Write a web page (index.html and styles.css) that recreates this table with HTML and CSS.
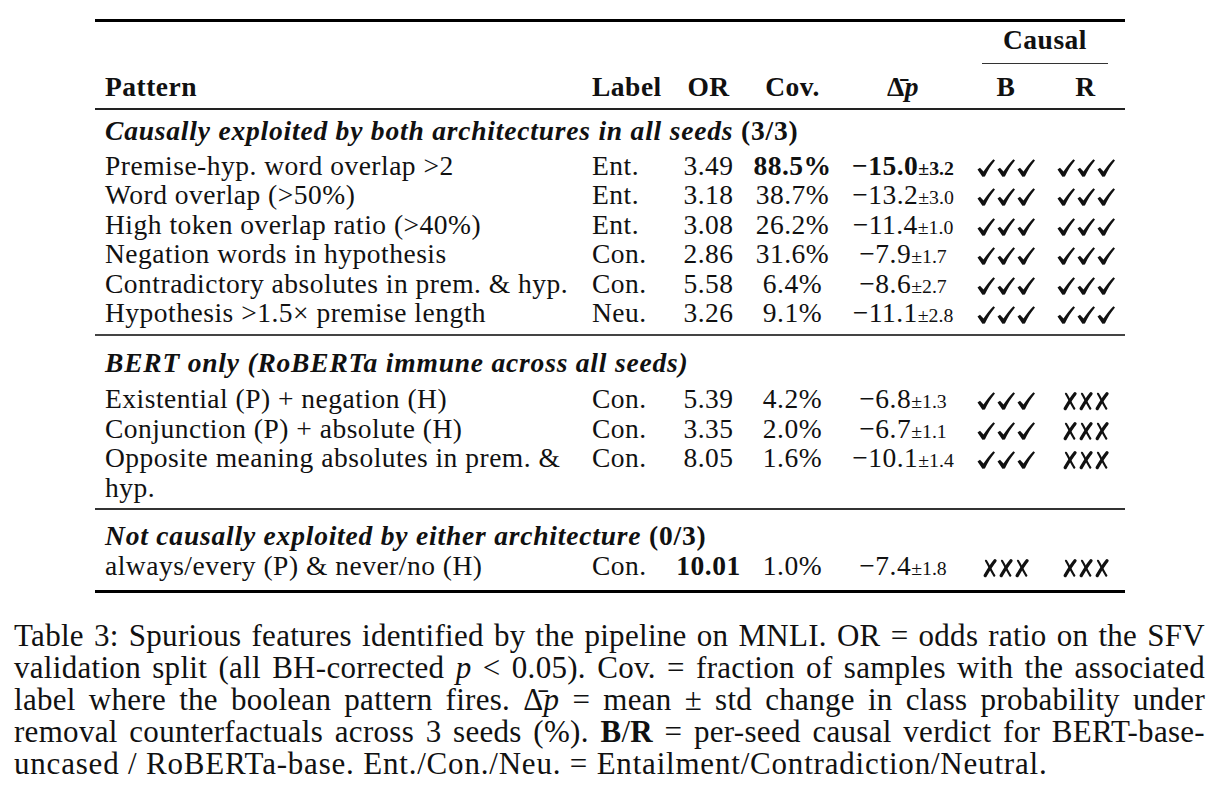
FILE: index.html
```
<!DOCTYPE html>
<html>
<head>
	<meta charset="utf-8">
	<title>Table 3</title>
	<link rel="stylesheet" href="styles.css">
</head>
<body>
	<svg class="defs" width="0" height="0">
		<defs>
			<symbol id="ck" viewBox="0 0 20 20">
				<path d="M1.5 11.6 L4 9.8 L7.5 13.6 C10.5 9 14 4.8 17.4 1.2 L19 2.4 C15 7 11.6 12.6 8.9 18.5 L6.4 18.7 Z"/>
			</symbol>
			<symbol id="xx" viewBox="0 0 16 20">
				<path d="M4 2.8 C6.5 7 9.5 13 12.3 17.6" fill="none" stroke="#111" stroke-width="2.2" stroke-linecap="round"/>
				<path d="M13 2.8 C10 6.5 6.5 12 3.2 17.6" fill="none" stroke="#111" stroke-width="3.3" stroke-linecap="round"/>
			</symbol>
			<symbol id="ck3" viewBox="0 0 60 20">
				<use href="#ck" width="20" height="20"/>
				<use href="#ck" x="20" width="20" height="20"/>
				<use href="#ck" x="40" width="20" height="20"/>
			</symbol>
			<symbol id="xx3" viewBox="0 0 48 20">
				<use href="#xx" width="16" height="20"/>
				<use href="#xx" x="16" width="16" height="20"/>
				<use href="#xx" x="32" width="16" height="20"/>
			</symbol>
		</defs>
	</svg>
	<div class="page">
		<table class="results">
			<colgroup>
				<col class="c-pattern">
				<col class="c-label">
				<col class="c-or">
				<col class="c-cov">
				<col class="c-delta">
				<col class="c-b">
				<col class="c-r">
			</colgroup>
			<thead>
				<tr class="super">
					<th colspan="5"></th>
					<th colspan="2" class="causal"><div class="cmid">Causal</div></th>
				</tr>
				<tr class="head">
					<th class="left">Pattern</th>
					<th class="left">Label</th>
					<th>OR</th>
					<th>Cov.</th>
					<th><span class="dbar">Δ̄</span><i>p</i></th>
					<th>B</th>
					<th>R</th>
				</tr>
			</thead>
			<tbody class="g1">
				<tr class="group-title"><td colspan="7"><b><i>Causally exploited by both architectures in all seeds</i> (3/3)</b></td></tr>
				<tr>
					<td class="left">Premise-hyp. word overlap &gt;2</td>
					<td class="left">Ent.</td>
					<td>3.49</td>
					<td><b>88.5%</b></td>
					<td><b>−15.0<small>±3.2</small></b></td>
					<td><svg class="ticks"><use href="#ck3"/></svg></td>
					<td><svg class="ticks"><use href="#ck3"/></svg></td>
				</tr>
				<tr>
					<td class="left">Word overlap (&gt;50%)</td>
					<td class="left">Ent.</td>
					<td>3.18</td>
					<td>38.7%</td>
					<td>−13.2<small>±3.0</small></td>
					<td><svg class="ticks"><use href="#ck3"/></svg></td>
					<td><svg class="ticks"><use href="#ck3"/></svg></td>
				</tr>
				<tr>
					<td class="left">High token overlap ratio (&gt;40%)</td>
					<td class="left">Ent.</td>
					<td>3.08</td>
					<td>26.2%</td>
					<td>−11.4<small>±1.0</small></td>
					<td><svg class="ticks"><use href="#ck3"/></svg></td>
					<td><svg class="ticks"><use href="#ck3"/></svg></td>
				</tr>
				<tr>
					<td class="left">Negation words in hypothesis</td>
					<td class="left">Con.</td>
					<td>2.86</td>
					<td>31.6%</td>
					<td>−7.9<small>±1.7</small></td>
					<td><svg class="ticks"><use href="#ck3"/></svg></td>
					<td><svg class="ticks"><use href="#ck3"/></svg></td>
				</tr>
				<tr>
					<td class="left">Contradictory absolutes in prem. &amp; hyp.</td>
					<td class="left">Con.</td>
					<td>5.58</td>
					<td>6.4%</td>
					<td>−8.6<small>±2.7</small></td>
					<td><svg class="ticks"><use href="#ck3"/></svg></td>
					<td><svg class="ticks"><use href="#ck3"/></svg></td>
				</tr>
				<tr>
					<td class="left">Hypothesis &gt;1.5× premise length</td>
					<td class="left">Neu.</td>
					<td>3.26</td>
					<td>9.1%</td>
					<td>−11.1<small>±2.8</small></td>
					<td><svg class="ticks"><use href="#ck3"/></svg></td>
					<td><svg class="ticks"><use href="#ck3"/></svg></td>
				</tr>
			</tbody>
			<tbody class="g2">
				<tr class="group-title"><td colspan="7"><b><i>BERT only (RoBERTa immune across all seeds)</i></b></td></tr>
				<tr>
					<td class="left">Existential (P) + negation (H)</td>
					<td class="left">Con.</td>
					<td>5.39</td>
					<td>4.2%</td>
					<td>−6.8<small>±1.3</small></td>
					<td><svg class="ticks"><use href="#ck3"/></svg></td>
					<td><svg class="crosses"><use href="#xx3"/></svg></td>
				</tr>
				<tr>
					<td class="left">Conjunction (P) + absolute (H)</td>
					<td class="left">Con.</td>
					<td>3.35</td>
					<td>2.0%</td>
					<td>−6.7<small>±1.1</small></td>
					<td><svg class="ticks"><use href="#ck3"/></svg></td>
					<td><svg class="crosses"><use href="#xx3"/></svg></td>
				</tr>
				<tr>
					<td class="left">Opposite meaning absolutes in prem. &amp;<br>hyp.</td>
					<td class="left">Con.</td>
					<td>8.05</td>
					<td>1.6%</td>
					<td>−10.1<small>±1.4</small></td>
					<td><svg class="ticks"><use href="#ck3"/></svg></td>
					<td><svg class="crosses"><use href="#xx3"/></svg></td>
				</tr>
			</tbody>
			<tbody class="g3">
				<tr class="group-title"><td colspan="7"><b><i>Not causally exploited by either architecture</i> (0/3)</b></td></tr>
				<tr>
					<td class="left">always/every (P) &amp; never/no (H)</td>
					<td class="left">Con.</td>
					<td><b>10.01</b></td>
					<td>1.0%</td>
					<td>−7.4<small>±1.8</small></td>
					<td><svg class="crosses"><use href="#xx3"/></svg></td>
					<td><svg class="crosses"><use href="#xx3"/></svg></td>
				</tr>
			</tbody>
		</table>

		<div class="caption">
			<div class="line">Table 3: Spurious features identified by the pipeline on MNLI. OR = odds ratio on the SFV</div>
			<div class="line">validation split (all BH-corrected <i>p</i> &lt; 0.05). Cov. = fraction of samples with the associated</div>
			<div class="line">label where the boolean pattern fires. <span class="dbar">Δ̄</span><i>p</i> = mean ± std change in class probability under</div>
			<div class="line">removal counterfactuals across 3 seeds (%). <b>B</b>/<b>R</b> = per-seed causal verdict for BERT-base-</div>
			<div class="line last">uncased / RoBERTa-base. Ent./Con./Neu. = Entailment/Contradiction/Neutral.</div>
		</div>
	</div>
</body>
</html>
```

FILE: styles.css
```
*{
	margin: 0;
	padding: 0;
	box-sizing: border-box;
}
body{
	background: #fff;
	color: #111;
	font-family: "Liberation Serif", "Times New Roman", serif;
}
.defs{
	position: absolute;
	width: 0;
	height: 0;
	overflow: hidden;
}
.page{
	width: 1224px;
	padding-top: 19px;
}

/* table */
.results{
	margin-left: 95px;
	width: 1030px;
	table-layout: fixed;
	border-collapse: separate;
	border-spacing: 0;
	border-top: 3px solid #000;
	border-bottom: 3px solid #000;
	font-size: 27.5px;
	letter-spacing: 0.5px;
}
.c-pattern{ width: 487px; }
.c-label{ width: 90px; }
.c-or{ width: 73px; }
.c-cov{ width: 95px; }
.c-delta{ width: 126px; }
.c-b{ width: 80px; }
.c-r{ width: 79px; }

.results th,
.results td{
	text-align: center;
	vertical-align: top;
	white-space: nowrap;
	font-weight: normal;
}
.results th{
	font-weight: bold;
}
.results .left{
	text-align: left;
	padding-left: 10px;
}

.super th{
	padding-top: 3px;
}
.cmid{
	line-height: 30px;
	padding-bottom: 8px;
	margin: 0 17px 0 16px;
	border-bottom: 1px solid #333;
}
.head th{
	line-height: 30px;
	padding-top: 8px;
	padding-bottom: 6px;
	border-bottom: 2px solid #222;
}
.dbar{
	font-style: normal;
	line-height: 0;
}

.group-title td{
	text-align: left;
	padding-left: 10px;
	line-height: 30px;
	letter-spacing: 0.8px;
}
.g1 .group-title td{
	padding-top: 6px;
	padding-bottom: 5px;
}
.g2 .group-title td{
	border-top: 2px solid #444;
	padding-top: 12px;
	padding-bottom: 7px;
}
.g3 .group-title td{
	border-top: 2px solid #333;
	padding-top: 11px;
}
.results tbody td{
	height: 29.5px;
	line-height: 29.5px;
}
.g1 tr:last-child td,
.g2 tr:last-child td{
	padding-bottom: 6px;
}
.g3 tr:last-child td{
	padding-bottom: 9.5px;
}

.results small{
	font-size: 0.72em;
	letter-spacing: 0;
	line-height: 0;
}
.ticks{
	width: 60px;
	height: 20px;
	vertical-align: -3px;
	fill: #111;
}
.crosses{
	width: 48px;
	height: 20px;
	vertical-align: -3px;
}

/* caption */
.caption{
	margin-top: 27px;
	margin-left: 14px;
	width: 1191px;
	font-size: 31px;
	line-height: 32px;
	letter-spacing: 0.3px;
}
.caption .line{
	text-align: justify;
	text-align-last: justify;
	white-space: nowrap;
}
.caption .line.last{
	text-align-last: left;
	letter-spacing: 0.8px;
}
```
